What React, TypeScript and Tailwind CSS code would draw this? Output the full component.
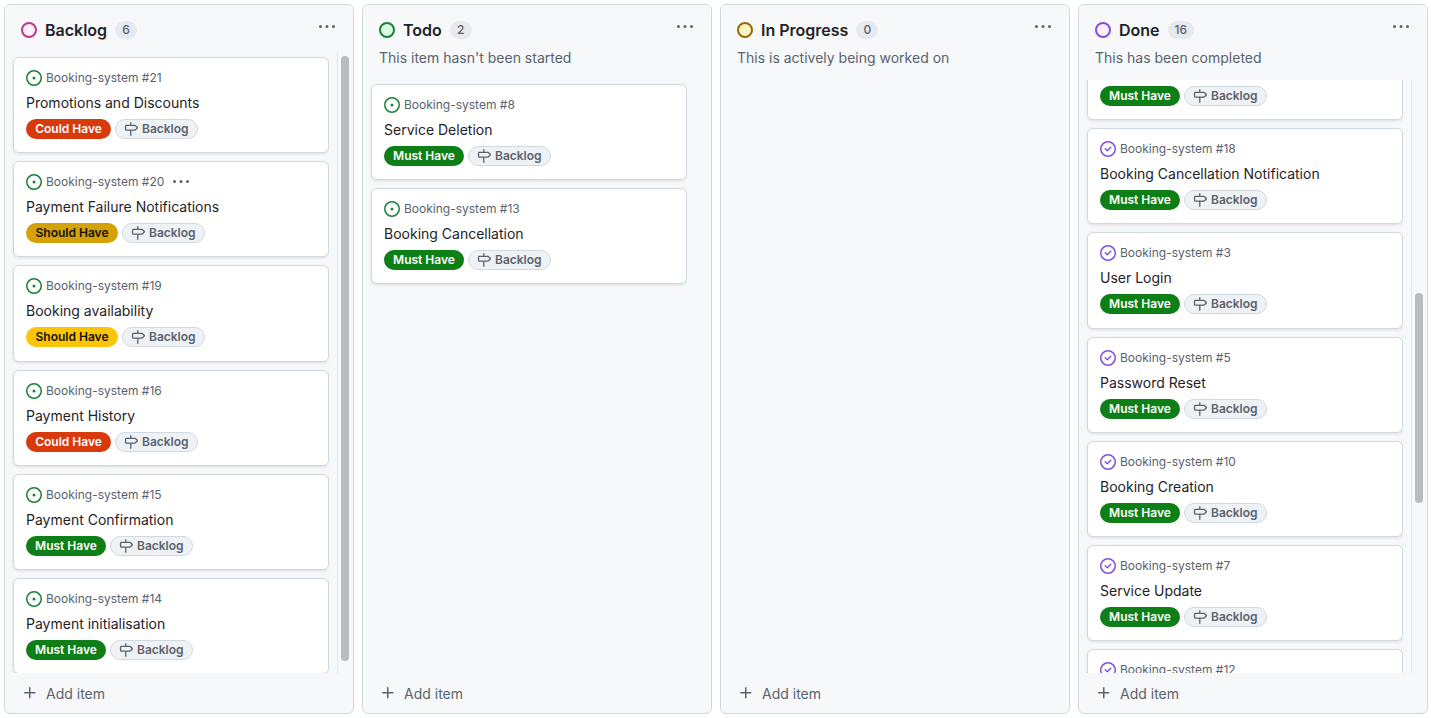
const OPEN = (
  <>
    <path d="M8 9.5a1.5 1.5 0 1 0 0-3 1.5 1.5 0 0 0 0 3Z" />
    <path d="M8 0a8 8 0 1 1 0 16A8 8 0 0 1 8 0ZM1.5 8a6.5 6.5 0 1 0 13 0 6.5 6.5 0 0 0-13 0Z" />
  </>
);
const CLOSED = (
  <>
    <path d="M11.28 6.78a.75.75 0 0 0-1.06-1.06L7.25 8.69 5.78 7.22a.75.75 0 0 0-1.06 1.06l2 2a.75.75 0 0 0 1.06 0l3.5-3.5Z" />
    <path d="M16 8A8 8 0 1 1 0 8a8 8 0 0 1 16 0Zm-1.5 0a6.5 6.5 0 1 0-13 0 6.5 6.5 0 0 0 13 0Z" />
  </>
);

function Kebab({ className }: { className: string }) {
  return (
    <svg viewBox="0 0 16 16" fill="currentColor" className={className}>
      <path d="M8 9a1.5 1.5 0 1 0 0-3 1.5 1.5 0 0 0 0 3ZM1.5 9a1.5 1.5 0 1 0 0-3 1.5 1.5 0 0 0 0 3Zm13 0a1.5 1.5 0 1 0 0-3 1.5 1.5 0 0 0 0 3Z" />
    </svg>
  );
}

function Milestone() {
  return (
    <svg viewBox="0 0 16 16" fill="currentColor" className="w-[14px] h-[14px] shrink-0">
      <path d="M7.75 0a.75.75 0 0 1 .75.75V3h3.634c.414 0 .814.147 1.13.414l2.07 1.75a1.75 1.75 0 0 1 0 2.672l-2.07 1.75a1.75 1.75 0 0 1-1.13.414H8.5v5.25a.75.75 0 0 1-1.5 0V10H2.75A1.75 1.75 0 0 1 1 8.25v-3.5C1 3.784 1.784 3 2.75 3H7V.75A.75.75 0 0 1 7.75 0Zm4.384 8.5a.25.25 0 0 0 .161-.06l2.07-1.75a.25.25 0 0 0 0-.38l-2.07-1.75a.25.25 0 0 0-.161-.06H2.75a.25.25 0 0 0-.25.25v3.5c0 .138.112.25.25.25h9.384Z" />
    </svg>
  );
}

type Priority = "must" | "should" | "could" | "shouldDim";

function Label({ p }: { p: Priority }) {
  if (p === "must")
    return <span className="h-5 w-[80px] shrink-0 rounded-full bg-[#0e7f17] text-white text-[12px] font-semibold flex items-center justify-center">Must Have</span>;
  if (p === "could")
    return <span className="h-5 w-[85px] shrink-0 rounded-full bg-[#d93a0b] text-white text-[12px] font-semibold flex items-center justify-center">Could Have</span>;
  if (p === "shouldDim")
    return <span className="h-5 w-[92px] shrink-0 rounded-full bg-[#d4a106] text-[#111] text-[12px] font-semibold flex items-center justify-center">Should Have</span>;
  return <span className="h-5 w-[92px] shrink-0 rounded-full bg-[#fbc404] text-[#111] text-[12px] font-semibold flex items-center justify-center">Should Have</span>;
}

function Card({
  num,
  title,
  p,
  done,
  kebab,
}: {
  num: number;
  title?: string;
  p: Priority;
  done?: boolean;
  kebab?: boolean;
}) {
  return (
    <div className="h-[96.2px] shrink-0 rounded-md border border-[#d1d9e0] bg-white px-3 pt-3 shadow-[0_1px_3px_rgba(31,35,40,0.12)]">
      <div className="flex items-center gap-1 h-4 text-[12px] leading-4 text-[#59636e]">
        <svg viewBox="0 0 16 16" fill="currentColor" className={`w-4 h-4 shrink-0 ${done ? "text-[#8250df]" : "text-[#1a7f37]"}`}>
          {done ? CLOSED : OPEN}
        </svg>
        <span>Booking-system #{num}</span>
        {kebab && <Kebab className="ml-[5px] w-4 h-4 text-[#59636e]" />}
      </div>
      <div className="mt-[6px] h-[21px] text-[14px] leading-[21px] text-[#1f2328]">{title ?? "\u00a0"}</div>
      <div className="mt-[6px] flex items-center gap-1">
        <Label p={p} />
        <span className="h-5 px-2 shrink-0 rounded-full border border-[#d1d9e0] bg-[#eff2f5] text-[#59636e] text-[12px] font-semibold flex items-center gap-1">
          <Milestone />
          Backlog
        </span>
      </div>
    </div>
  );
}

function Column({
  name,
  count,
  desc,
  ring,
  fill,
  children,
  thumb,
  bottomGap,
}: {
  name: string;
  count: number;
  desc?: string;
  ring: string;
  fill: string;
  children?: React.ReactNode;
  thumb?: React.ReactNode;
  bottomGap: string;
}) {
  return (
    <section className="w-[350px] shrink-0 h-full rounded-md border border-[#d1d9e0] bg-[#f6f8fa] flex flex-col overflow-hidden">
      <header className="shrink-0 pl-4 pr-[18px] relative z-10 bg-[#f6f8fa]">
        <div className="flex items-center h-[17px] mt-[16px]">
          <span className={`w-4 h-4 rounded-full border-2 shrink-0 ${ring} ${fill}`} />
          <h2 className="ml-2 text-[16px] leading-6 font-semibold text-[#1f2328]">{name}</h2>
          <span className="ml-2 h-[18px] min-w-[22px] px-[7px] rounded-full bg-[#e6eaef] text-[12px] font-medium text-[#59636e] flex items-center justify-center">
            {count}
          </span>
          <Kebab className="ml-auto -mt-[6px] w-4 h-4 text-[#59636e]" />
        </div>
        {desc && <p className="mt-[9px] h-[21px] mb-[-3px] text-[14px] leading-[21px] text-[#59636e]">{desc}</p>}
      </header>
      <div className={`flex-1 min-h-0 mt-[15px] flex relative ${desc ? "-mt-0" : ""}`}>
        <div className="flex-1 min-w-0 overflow-hidden pl-2">{children}</div>
        <div className={`w-[16px] shrink-0 ml-2 border-l border-[#e3e6ea] relative ${bottomGap}`}>{thumb}</div>
      </div>
      <footer className="shrink-0 h-[40px] pl-[17px] flex items-center gap-[8px] text-[14px] text-[#59636e]">
        <svg viewBox="0 0 16 16" fill="currentColor" className="w-4 h-4">
          <path d="M7.75 2a.75.75 0 0 1 .75.75V7h4.25a.75.75 0 0 1 0 1.5H8.5v4.25a.75.75 0 0 1-1.5 0V8.5H2.75a.75.75 0 0 1 0-1.5H7V2.75A.75.75 0 0 1 7.75 2Z" />
        </svg>
        <span className="ml-[0px]">Add item</span>
      </footer>
    </section>
  );
}

export default function App() {
  return (
    <div className="h-[718px] w-[1431px] overflow-hidden bg-white flex gap-2 pl-1 py-1 font-['Inter','Noto_Sans',sans-serif]">
      <Column
        name="Backlog"
        count={6}
        ring="border-[#bf3989]"
        fill="bg-[#ffeff7]"
        bottomGap=""
        thumb={<div className="absolute left-[3px] top-[3px] w-2 h-[605px] rounded-full bg-[#bbbbbb]" />}
      >
        <div className="flex flex-col gap-2 pt-1">
          <Card num={21} title="Promotions and Discounts" p="could" />
          <Card num={20} title="Payment Failure Notifications" p="shouldDim" kebab />
          <Card num={19} title="Booking availability" p="should" />
          <Card num={16} title="Payment History" p="could" />
          <Card num={15} title="Payment Confirmation" p="must" />
          <Card num={14} title="Payment initialisation" p="must" />
        </div>
      </Column>
      <Column
        name="Todo"
        count={2}
        desc="This item hasn't been started"
        ring="border-[#1a7f37]"
        fill="bg-[#dafbe1]"
        bottomGap="invisible"
      >
        <div className="flex flex-col gap-2 pt-1">
          <Card num={8} title="Service Deletion" p="must" />
          <Card num={13} title="Booking Cancellation" p="must" />
        </div>
      </Column>
      <Column
        name="In Progress"
        count={0}
        desc="This is actively being worked on"
        ring="border-[#9a6700]"
        fill="bg-[#fff8c5]"
        bottomGap="invisible"
      />
      <Column
        name="Done"
        count={16}
        desc="This has been completed"
        ring="border-[#8250df]"
        fill="bg-[#fbefff]"
        bottomGap=""
        thumb={<div className="absolute left-[3px] top-[213px] w-2 h-[210px] rounded-full bg-[#bbbbbb]" />}
      >
        <div className="flex flex-col gap-2 -mt-[56px]">
          <Card num={17} p="must" done />
          <Card num={18} title="Booking Cancellation Notification" p="must" done />
          <Card num={3} title="User Login" p="must" done />
          <Card num={5} title="Password Reset" p="must" done />
          <Card num={10} title="Booking Creation" p="must" done />
          <Card num={7} title="Service Update" p="must" done />
          <Card num={12} p="must" done />
        </div>
      </Column>
    </div>
  );
}
